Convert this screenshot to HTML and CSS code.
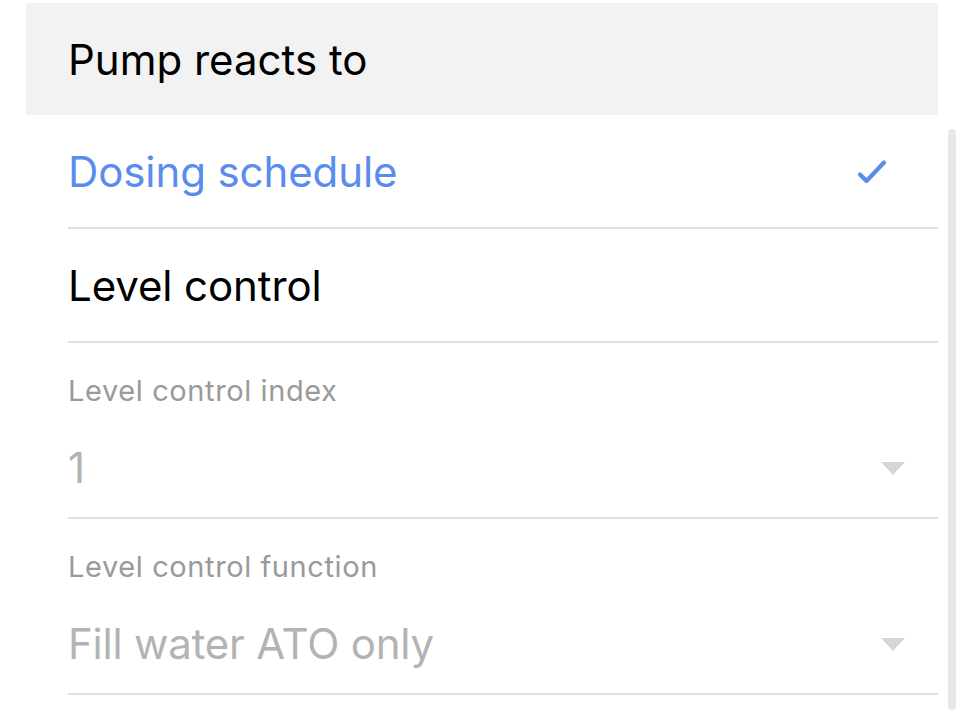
FILE: index.html
```html
<!DOCTYPE html>
<html lang="en">
<head>
<meta charset="utf-8">
<title>Pump reacts to</title>
<link rel="stylesheet" href="styles.css">
</head>
<body>
<div class="screen">
  <div class="section-header">Pump reacts to</div>
  <ul class="options">
    <li class="option selected">
      <span class="option-label">Dosing schedule</span>
      <svg class="check" width="32" height="28" viewBox="0 0 32 28" aria-hidden="true">
        <path d="M4 16.5 L10.5 23 L28 4.5" fill="none" stroke="#5a8cee" stroke-width="4.2" stroke-linecap="round" stroke-linejoin="round"/>
      </svg>
    </li>
    <li class="option">
      <span class="option-label">Level control</span>
    </li>
    <li class="field">
      <div class="field-label">Level control index</div>
      <div class="field-value">
        <span>1</span>
        <span class="caret"></span>
      </div>
    </li>
    <li class="field">
      <div class="field-label">Level control function</div>
      <div class="field-value">
        <span>Fill water ATO only</span>
        <span class="caret"></span>
      </div>
    </li>
  </ul>
  <div class="scrollbar"></div>
</div>
</body>
</html>
```
FILE: styles.css
```css
* { box-sizing: border-box; }
html, body {
  margin: 0;
  padding: 0;
  background: #ffffff;
}
body {
  font-family: Inter, "Noto Sans", "Liberation Sans", sans-serif;
  color: #000;
  width: 964px;
  height: 720px;
  overflow: hidden;
}
.screen {
  position: relative;
  height: 720px;
  padding: 3px 26px 0 26px;
}
.section-header {
  height: 112px;
  width: 912px;
  background: #f2f2f2;
  padding-left: 42px;
  display: flex;
  align-items: center;
  font-size: 42px;
  letter-spacing: 0;
  color: #000;
}
.options {
  list-style: none;
  margin: 0;
  padding: 0 0 0 42px;
  width: 912px;
}
.option {
  height: 114px;
  display: flex;
  align-items: center;
  justify-content: space-between;
  border-bottom: 2px solid #dedede;
  font-size: 42px;
  letter-spacing: -0.1px;
}
.option.selected { color: #5a8cee; }
.check { margin-right: 50px; margin-top: 2px; }
.field {
  height: 176px;
  border-bottom: 2px solid #dedede;
  display: flex;
  flex-direction: column;
  padding-top: 31px;
}
.field-label {
  font-size: 29px;
  color: #9a9a9a;
  letter-spacing: 0.6px;
  line-height: 34px;
}
.field-value {
  margin-top: 38px;
  display: flex;
  align-items: center;
  justify-content: space-between;
  font-size: 42px;
  color: #b3b3b3;
  letter-spacing: -0.2px;
  line-height: 44px;
}
.caret {
  width: 0;
  height: 0;
  margin-right: 33px;
  border-left: 12px solid transparent;
  border-right: 12px solid transparent;
  border-top: 13px solid #d6d6d6;
}
.scrollbar {
  position: absolute;
  left: 948px;
  top: 129px;
  width: 8px;
  height: 581px;
  border-radius: 4px;
  background: #e8e8e8;
}
```
